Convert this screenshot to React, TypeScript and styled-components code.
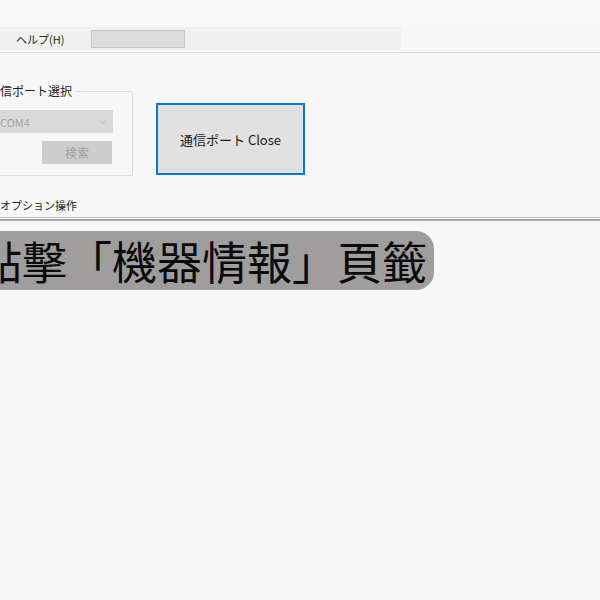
import styled, { createGlobalStyle } from "styled-components"

const GlobalStyle = createGlobalStyle`
  html, body {
    margin: 0;
    padding: 0;
    background: #f7f7f7;
    overflow: hidden;
  }
  body {
    font-family: "Noto Sans CJK JP", "Noto Sans", sans-serif;
    color: #1a1a1a;
  }
`

const Window = styled.div`
  width: 600px;
  height: 600px;
  display: flex;
  flex-direction: column;
  overflow: hidden;
`

const TopGap = styled.div`
  height: 27px;
  background: #f8f8f8;
`

const MenuBar = styled.div`
  width: 401px;
  height: 23px;
  background: #f0f0f0;
  display: flex;
  align-items: center;
`

const MenuItem = styled.span`
  font-size: 11px;
  padding-left: 16px;
  color: #222;
`

const MenuField = styled.div`
  margin-left: 27px;
  width: 92px;
  height: 16px;
  background: #dcdcdc;
  border: 1px solid #c6c6c6;
`

const Rule = styled.div`
  margin-top: 2px;
  height: 1px;
  background: #d8d8d8;
`

const Controls = styled.div`
  display: flex;
  align-items: flex-start;
  padding-top: 30px;
`

const GroupBox = styled.fieldset`
  margin: 0 0 0 -22px;
  width: 155px;
  height: 93px;
  box-sizing: border-box;
  border: 1px solid #dcdcdc;
  border-radius: 2px;
  padding: 0 19px 10px 0;
  display: flex;
  flex-direction: column;
  align-items: flex-end;
`

const Legend = styled.legend`
  font-size: 12px;
  line-height: 16px;
  padding: 0 3px;
  margin-left: 6px;
  color: #222;
`

const Combo = styled.div`
  margin-top: 11px;
  width: 117px;
  height: 23px;
  background: #d9d9d9;
  display: flex;
  align-items: center;
  justify-content: space-between;
  padding: 0 6px 0 4px;
  box-sizing: border-box;
  font-size: 11px;
  color: #a2a2a2;
`

const Chevron = styled.svg`
  width: 8px;
  height: 8px;
`

const SearchButton = styled.div`
  margin-top: 8px;
  margin-right: 1px;
  width: 70px;
  height: 23px;
  background: #cdcdcd;
  color: #a0a0a0;
  font-size: 12px;
  display: flex;
  align-items: center;
  justify-content: center;
`

const CloseButton = styled.div`
  margin: 20px 0 0 23px;
  width: 149px;
  height: 72px;
  box-sizing: border-box;
  border: 2px solid #0078d7;
  background: #e1e1e1;
  display: flex;
  align-items: center;
  justify-content: center;
  font-size: 13px;
  color: #1a1a1a;
`

const SectionLabel = styled.div`
  margin-top: 21px;
  font-size: 11px;
  line-height: 16px;
  color: #222;
`

const ThinLine = styled.div`
  margin-top: 4px;
  height: 1px;
  background: #c2c2c2;
  border-bottom: 1px solid #fafafa;
`

const ThickLine = styled.div`
  height: 2px;
  background: #a9a9a9;
`

const Caption = styled.div`
  margin: 10px 0 0 -44px;
  align-self: flex-start;
  height: 59px;
  display: flex;
  align-items: center;
  padding: 0 7px 0 21px;
  background: #9f9d9e;
  border-radius: 0 18px 18px 0;
  font-family: "Noto Sans CJK TC", "Noto Sans CJK JP", sans-serif;
  font-size: 45px;
  color: #0a0a0a;
  white-space: nowrap;
`

export default function App() {
  return (
    <>
      <GlobalStyle />
      <Window>
        <TopGap />
        <MenuBar>
          <MenuItem>ヘルプ(H)</MenuItem>
          <MenuField />
        </MenuBar>
        <Rule />
        <Controls>
          <GroupBox>
            <Legend>通信ポート選択</Legend>
            <Combo>
              COM4
              <Chevron viewBox="0 0 8 8">
                <path d="M1 2.5 L4 5.5 L7 2.5" fill="none" stroke="#b8b8b8" strokeWidth="1" />
              </Chevron>
            </Combo>
            <SearchButton>検索</SearchButton>
          </GroupBox>
          <CloseButton>通信ポート Close</CloseButton>
        </Controls>
        <SectionLabel>オプション操作</SectionLabel>
        <ThinLine />
        <ThickLine />
        <Caption>點擊「機器情報」頁籤</Caption>
      </Window>
    </>
  )
}
